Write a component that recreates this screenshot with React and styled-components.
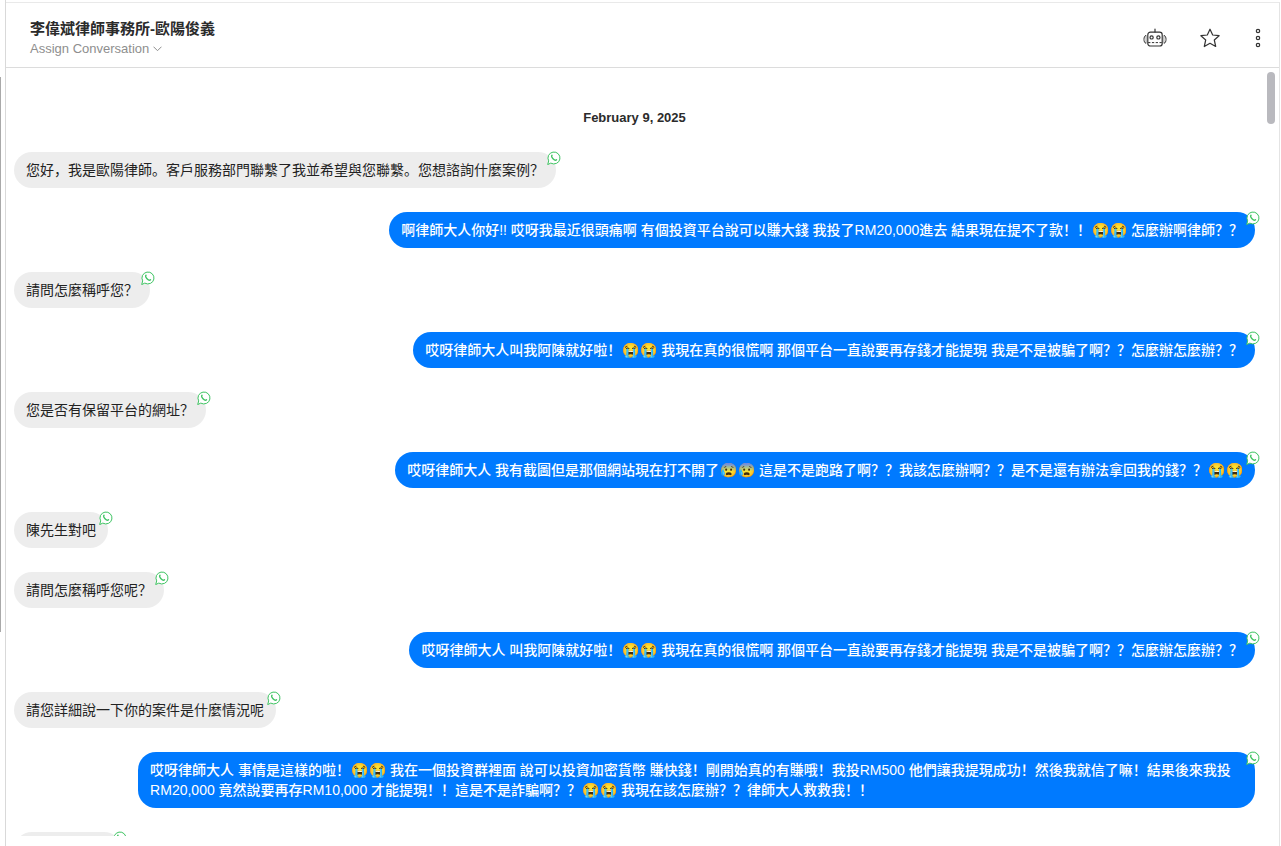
import React from "react"
import styled, { createGlobalStyle } from "styled-components"

const GlobalStyle = createGlobalStyle`
  * {
    box-sizing: border-box;
  }

  body {
    margin: 0;
    background: #fff;
    font-family: "Liberation Sans", "Noto Sans CJK SC", sans-serif;
    color: #2b2b2b;
  }
`

const Page = styled.div`
  display: flex;
  height: 100vh;
  padding-right: 1px;
`

const Rail = styled.div`
  flex: none;
  width: 6px;
  padding-top: 77px;
  border-right: 1px solid #d9d9d9;
`

const RailThumb = styled.div`
  width: 1px;
  height: 555px;
  background: #a9a9a9;
`

const Panel = styled.main`
  flex: 1;
  min-width: 0;
  display: flex;
  flex-direction: column;
  margin-top: 2px;
  padding-bottom: 10px;
  border-top: 1px solid #e9e9e9;
  border-right: 1px solid #e4e4e4;
`

const Header = styled.header`
  flex: none;
  display: flex;
  align-items: center;
  justify-content: space-between;
  height: 65px;
  padding: 6px 16px 0 24px;
  border-bottom: 1px solid #dcdcdc;
`

const Name = styled.h1`
  margin: 0;
  padding-top: 2px;
  font-size: 15px;
  line-height: 20px;
  font-weight: 700;
`

const AssignButton = styled.button`
  display: flex;
  align-items: center;
  gap: 4px;
  padding: 0;
  border: 0;
  background: none;
  font-family: inherit;
  font-size: 13px;
  line-height: 20px;
  color: #8e8e8e;
`

const Actions = styled.div`
  display: flex;
  align-items: center;
  gap: 33px;
`

const IconButton = styled.button`
  display: flex;
  padding: 0;
  border: 0;
  background: none;
  color: #333;
`

const Scroller = styled.section`
  position: relative;
  flex: 1;
  min-height: 0;
  overflow: hidden;
  padding: 40px 24px 0 8px;
`

const ScrollThumb = styled.div`
  position: absolute;
  top: 4px;
  right: 4px;
  width: 8px;
  height: 52px;
  border-radius: 4px;
  background: #b9b9be;
`

const DateLabel = styled.div`
  margin-bottom: 24px;
  font-size: 13px;
  line-height: 20px;
  font-weight: 700;
  text-align: center;
`

const MessageList = styled.div`
  display: flex;
  flex-direction: column;
  gap: 24px;
`

const Bubble = styled.div`
  position: relative;
  align-self: ${props => props.$mine ? "flex-end" : "flex-start"};
  max-width: 90%;
  min-width: ${props => props.$empty ? "108px" : "0"};
  min-height: 36px;
  padding: 8px 12px;
  border-radius: 18px;
  background: ${props => props.$mine ? "#007aff" : "#ededed"};
  color: ${props => props.$mine ? "#fff" : "#222"};
  font-size: 14px;
  line-height: 20px;
  font-weight: ${props => props.$mine ? 500 : 400};
`

const Emoji = styled.span`
  display: inline-block;
  width: 18px;
  text-align: center;
`

const Badge = styled.svg`
  position: absolute;
  top: -1px;
  right: -5px;
  width: 14px;
  height: 14px;
`

const messages = [
  { text: "您好，我是歐陽律師。客戶服務部門聯繫了我並希望與您聯繫。您想諮詢什麼案例？" },
  { mine: true, text: "啊律師大人你好!! 哎呀我最近很頭痛啊 有個投資平台說可以賺大錢 我投了RM20,000進去 結果現在提不了款！！😭😭 怎麼辦啊律師？？" },
  { text: "請問怎麼稱呼您？" },
  { mine: true, text: "哎呀律師大人叫我阿陳就好啦！😭😭 我現在真的很慌啊 那個平台一直說要再存錢才能提現 我是不是被騙了啊？？怎麼辦怎麼辦？？" },
  { text: "您是否有保留平台的網址？" },
  { mine: true, text: "哎呀律師大人 我有截圖但是那個網站現在打不開了😰😰 這是不是跑路了啊？？我該怎麼辦啊？？是不是還有辦法拿回我的錢？？😭😭" },
  { text: "陳先生對吧" },
  { text: "請問怎麼稱呼您呢？" },
  { mine: true, text: "哎呀律師大人 叫我阿陳就好啦！😭😭 我現在真的很慌啊 那個平台一直說要再存錢才能提現 我是不是被騙了啊？？怎麼辦怎麼辦？？" },
  { text: "請您詳細說一下你的案件是什麼情況呢" },
  { mine: true, text: "哎呀律師大人 事情是這樣的啦！😭😭 我在一個投資群裡面 說可以投資加密貨幣 賺快錢！剛開始真的有賺哦！我投RM500 他們讓我提現成功！然後我就信了嘛！結果後來我投RM20,000 竟然說要再存RM10,000 才能提現！！這是不是詐騙啊？？😭😭 我現在該怎麼辦？？律師大人救救我！！" },
  { text: "" },
]

// every emoji gets the same width, whatever the emoji font gives
function renderText (text) {
  return text.split(/(😭|😰)/u).map((part, index) => (
    index % 2 ? <Emoji key={index}>{part}</Emoji> : part
  ))
}

function WhatsAppBadge () {
  return (
    <Badge viewBox="0 0 14 14" fill="#fff" stroke="#3fc463" strokeLinecap="round" strokeLinejoin="round">
      <path d="M.8 13.2l.9-3.3A6 6 0 1 1 4.100 12.300z" />
      <path d="M5 4.300c-.8.8-.2 2.300 1 3.500s2.700 1.800 3.500 1" fill="none" strokeWidth="1.400" />
    </Badge>
  )
}

function RobotIcon () {
  return (
    <svg width="24" height="20" viewBox="0 0 24 20" fill="none" stroke="currentColor" strokeWidth="1.2" strokeLinecap="round">
      <path d="M12 1v3" />
      <rect x="4.800" y="4.200" width="14.400" height="13.800" rx="2.600" />
      <circle cx="8.600" cy="9.400" r="1.600" />
      <circle cx="15.400" cy="9.400" r="1.600" />
      <path d="M5.500 14.600h13" strokeWidth="1" strokeDasharray="1.500 2.300" />
      <path d="M2.600 7.500C.3 7.800.3 14.900 2.600 15.200M21.400 7.500c2.300.3 2.300 7.400 0 7.700" strokeWidth="1" />
      <path d="M3.100 7.500v7.700M20.900 7.500v7.700" strokeWidth=".5" />
    </svg>
  )
}

function StarIcon () {
  return (
    <svg width="20" height="20" viewBox="0 0 20 20" fill="none" stroke="currentColor" strokeWidth="1.2" strokeLinejoin="round">
      <path d="M10 1.200l2.700 5.800 6.400.7-4.800 4.300 1.400 6.500L10 15.300l-5.700 3.200L5.700 12 .9 7.700l6.400-.7z" />
    </svg>
  )
}

function MoreIcon () {
  return (
    <svg width="10" height="20" viewBox="0 0 10 20" fill="none" stroke="currentColor" strokeWidth="1.2">
      <circle cx="5" cy="3" r="1.700" />
      <circle cx="5" cy="10" r="1.700" />
      <circle cx="5" cy="17" r="1.700" />
    </svg>
  )
}

function App () {
  return (
    <Page>
      <GlobalStyle />
      <Rail>
        <RailThumb />
      </Rail>
      <Panel>
        <Header>
          <div>
            <Name>李偉斌律師事務所-歐陽俊義</Name>
            <AssignButton type="button">
              Assign Conversation
              <svg width="9" height="6" viewBox="0 0 9 6" fill="none" stroke="currentColor">
                <path d="M.5.700l4 4 4-4" />
              </svg>
            </AssignButton>
          </div>
          <Actions>
            <IconButton type="button" aria-label="Bot"><RobotIcon /></IconButton>
            <IconButton type="button" aria-label="Star"><StarIcon /></IconButton>
            <IconButton type="button" aria-label="More"><MoreIcon /></IconButton>
          </Actions>
        </Header>
        <Scroller>
          <DateLabel>February 9, 2025</DateLabel>
          <MessageList>
            {messages.map((message, index) => (
              <Bubble key={index} $mine={message.mine} $empty={!message.text}>
                {renderText(message.text)}
                <WhatsAppBadge />
              </Bubble>
            ))}
          </MessageList>
          <ScrollThumb />
        </Scroller>
      </Panel>
    </Page>
  )
}

export default App
